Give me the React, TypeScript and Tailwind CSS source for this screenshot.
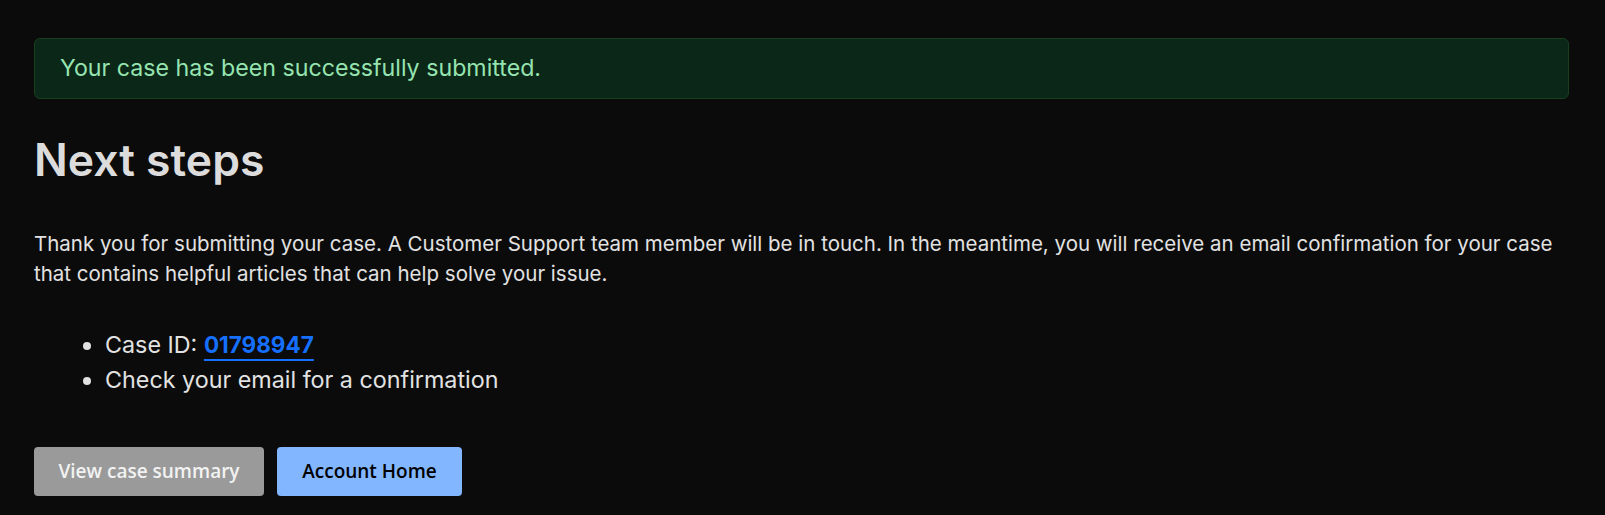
import React from "react";

export default function App() {
  return (
    <div className="min-h-[515px] bg-[#0b0b0b] pl-[34px] pr-[36px] pt-[38px] text-[#e2e2e2]" style={{ fontFamily: "Inter, 'Noto Sans', sans-serif" }}>
      <div className="rounded-[6px] border border-[#18401f] bg-[#0a2717] py-[15px] pl-[25px] text-[23.2px] leading-[29px] text-[#96e4b0]">
        Your case has been successfully submitted.
      </div>
      <h1 className="mt-[34px] text-[44.5px] font-semibold leading-[54px] text-[#dcdcdc]">Next steps</h1>
      <p className="mt-[42px] text-[20.5px] leading-[30px] text-[#e2e2e2]">
        Thank you for submitting your case. A Customer Support team member will be in touch. In the meantime, you will receive an email confirmation for your case that contains helpful articles that can help solve your issue.
      </p>
      <ul className="mt-[38px] list-disc pl-[71px] text-[23.3px] leading-[35px] text-[#e2e2e2]">
        <li>
          Case ID:{" "}
          <a href="#" className="text-[22.5px] font-bold text-[#1670ff] underline decoration-2 underline-offset-[6px]">01798947</a>
        </li>
        <li>Check your email for a confirmation</li>
      </ul>
      <div className="mt-[50px] flex gap-[13px]" style={{ fontFamily: "'Open Sans', sans-serif" }}>
        <button className="h-[49px] w-[230px] rounded-[4px] bg-[#9a9a9a] text-[19px] font-semibold text-[#f2f2f2]">View case summary</button>
        <button className="h-[49px] w-[185px] rounded-[4px] bg-[#82b6ff] text-[19px] font-semibold text-black">Account Home</button>
      </div>
    </div>
  );
}
